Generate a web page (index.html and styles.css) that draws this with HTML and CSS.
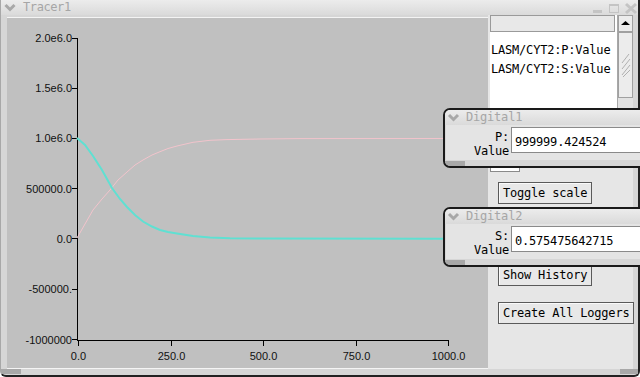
FILE: index.html
```html
<!DOCTYPE html>
<html>
<head>
<meta charset="utf-8">
<title>Tracer1</title>
<link rel="stylesheet" href="styles.css">
</head>
<body>
    <div class="tracer">
        <div class="titlebar">
            <svg class="chevron" width="14" height="15" viewBox="0 0 14 15"><polyline points="3.5,5 8,9.5 12.5,5" fill="none" stroke="#a8a8a8" stroke-width="3"/></svg>
            <span class="title">Tracer1</span>
            <div class="title-buttons">
                <svg width="48" height="15" viewBox="590 0 48 15">
                    <rect x="593" y="10" width="9" height="3" fill="#c4c4c4"/>
                    <rect x="609.5" y="4.5" width="9" height="8" fill="none" stroke="#c4c4c4" stroke-width="1"/>
                    <rect x="609" y="4" width="10" height="2" fill="#c4c4c4"/>
                    <path d="M626,4 L636,13 M636,4 L626,13" stroke="#c4c4c4" stroke-width="3"/>
                </svg>
            </div>
        </div>
        <div class="client">
            <div class="plot">
                <svg width="481" height="350" viewBox="7 18 481 350">
                    <g class="axis" stroke="#000" stroke-width="1">
                        <line x1="77.5" y1="38" x2="77.5" y2="341"/>
                        <line x1="77" y1="340.5" x2="449" y2="340.5"/>
                        <line x1="72" y1="38.5" x2="77.5" y2="38.5"/>
                        <line x1="72" y1="88.5" x2="77.5" y2="88.5"/>
                        <line x1="72" y1="138.5" x2="77.5" y2="138.5"/>
                        <line x1="72" y1="188.5" x2="77.5" y2="188.5"/>
                        <line x1="72" y1="238.5" x2="77.5" y2="238.5"/>
                        <line x1="72" y1="289.5" x2="77.5" y2="289.5"/>
                        <line x1="72" y1="339.5" x2="77.5" y2="339.5"/>
                        <line x1="78.5" y1="340.5" x2="78.5" y2="346"/>
                        <line x1="171.5" y1="340.5" x2="171.5" y2="346"/>
                        <line x1="263.5" y1="340.5" x2="263.5" y2="346"/>
                        <line x1="356.5" y1="340.5" x2="356.5" y2="346"/>
                        <line x1="448.5" y1="340.5" x2="448.5" y2="346"/>
                    </g>
                    <g class="ylabels" text-anchor="end">
                        <text x="72" y="42">2.0e6.0</text>
                        <text x="72" y="92">1.5e6.0</text>
                        <text x="72" y="142">1.0e6.0</text>
                        <text x="72" y="192.5">500000.0</text>
                        <text x="72" y="242.5">0.0</text>
                        <text x="72" y="293">-500000.</text>
                        <text x="72" y="343.5">-1000000</text>
                    </g>
                    <g class="xlabels" text-anchor="middle">
                        <text x="78.5" y="360">0.0</text>
                        <text x="171.5" y="360">250.0</text>
                        <text x="263.5" y="360">500.0</text>
                        <text x="356.5" y="360">750.0</text>
                        <text x="448.5" y="360">1000.0</text>
                    </g>
                    <polyline class="curve-p" points="77,238 85,224 93,210 102,199 110,190 118,180 127,172 135,165 143,160 152,155 160,151.7 168,148.5 177,146 193,142.3 210,140.3 227,139.6 260,139 300,138.6 448,138.5"/>
                    <polyline class="curve-s" points="77,138 85,145 93,156 102,170 112,188 120,199 127,207 135,215 143,221.5 152,226.5 160,230 168,232 177,233.5 193,236 210,237.5 230,238.3 260,238.6 448,238.7"/>
                </svg>
            </div>
            <div class="panel">
                <div class="list">
                    <div class="list-body">
                        <div class="list-header"></div>
                        <div class="list-row">LASM/CYT2:P:Value</div>
                        <div class="list-row">LASM/CYT2:S:Value</div>
                    </div>
                    <div class="scrollbar">
                        <div class="scroll-up">
                            <svg width="9" height="5" viewBox="0 0 9 5"><polygon points="4.5,0 9,4 0,4" fill="#000"/></svg>
                        </div>
                        <div class="scroll-thumb">
                            <svg width="10" height="24" viewBox="0 0 10 24"><path d="M1,10 L8,1 M1,16 L9,6 M1,22 L9,12 M2,24 L9,17" stroke="#b0b0b0" stroke-width="1" fill="none"/></svg>
                        </div>
                    </div>
                </div>
                <div class="small-field"></div>
                <button type="button" class="btn btn-toggle">Toggle scale</button>
                <button type="button" class="btn btn-history">Show History</button>
                <button type="button" class="btn btn-loggers">Create All Loggers</button>
            </div>
        </div>
    </div>

    <div class="digital digital-1">
        <div class="titlebar">
            <svg class="chevron" width="14" height="15" viewBox="0 0 14 15"><polyline points="3,5 7.5,9.5 12,5" fill="none" stroke="#a8a8a8" stroke-width="3"/></svg>
            <span class="title">Digital1</span>
        </div>
        <div class="digital-body">
            <div class="digital-label">P:<br>Value</div>
            <div class="digital-field">999999.424524</div>
        </div>
    </div>

    <div class="digital digital-2">
        <div class="titlebar">
            <svg class="chevron" width="14" height="15" viewBox="0 0 14 15"><polyline points="3,5 7.5,9.5 12,5" fill="none" stroke="#a8a8a8" stroke-width="3"/></svg>
            <span class="title">Digital2</span>
        </div>
        <div class="digital-body">
            <div class="digital-label">S:<br>Value</div>
            <div class="digital-field">0.575475642715</div>
        </div>
    </div>
</body>
</html>
```

FILE: styles.css
```css
body {
    margin: 0;
    width: 640px;
    height: 377px;
    overflow: hidden;
    position: relative;
    background-color: #fff;
    font-family: "DejaVu Sans Mono", "Liberation Mono", monospace;
    font-size: 12px;
}
.tracer {
    box-sizing: border-box;
    width: 640px;
    height: 377px;
    display: flex;
    flex-direction: column;
    background-color: #d6d6d6;
    border-left: 1px solid #a8a8a8;
    border-right: 2px solid #222;
    border-bottom: 2px solid #222;
    border-radius: 0 0 6px 6px;
    position: relative;
}
.tracer::before {
    content: "";
    position: absolute;
    left: 0;
    bottom: 1px;
    width: 20px;
    height: 5px;
    background-color: #a8a8a8;
}
.tracer::after {
    content: "";
    position: absolute;
    right: 0;
    bottom: 1px;
    width: 18px;
    height: 5px;
    background-color: #a8a8a8;
}
.titlebar {
    height: 15px;
    flex-shrink: 0;
    display: flex;
    align-items: center;
    background: linear-gradient(#ececec, #dadada);
}
.chevron {
    flex-shrink: 0;
    margin-left: 1px;
}
.title {
    margin-left: 7px;
    color: #a6a6a6;
    letter-spacing: -0.4px;
    line-height: 15px;
}
.title-buttons {
    margin-left: auto;
    display: flex;
}
.title-buttons svg {
    display: block;
}
.client {
    flex: 1;
    display: flex;
    padding: 0 5px 6px 6px;
}
.plot {
    flex: 1;
    margin-top: 2px;
    background-color: #c0c0c0;
    border-top: 1px solid #f4f4f4;
    border-bottom: 1px solid #f4f4f4;
}
.plot svg {
    display: block;
}
.ylabels text, .xlabels text {
    font-family: "Liberation Sans", Arial, sans-serif;
    font-size: 11px;
    fill: #111;
}
.curve-p {
    fill: none;
    stroke: #f2c4cc;
    stroke-width: 1;
}
.curve-s {
    fill: none;
    stroke: #5fe0d2;
    stroke-width: 2;
}
.panel {
    width: 145px;
    flex-shrink: 0;
    background-color: #e6e6e6;
    display: flex;
    flex-direction: column;
    align-items: flex-start;
}
.list {
    align-self: stretch;
    height: 137px;
    display: flex;
    margin-left: 2px;
    background-color: #fff;
}
.list-body {
    flex: 1;
}
.list-header {
    box-sizing: border-box;
    height: 17px;
    margin-right: 2px;
    background-color: #e8e8e8;
    border: 1px solid #9a9a9a;
    margin-bottom: 9px;
}
.list-row {
    height: 19px;
    line-height: 19px;
    padding-left: 1px;
    letter-spacing: -0.2px;
    white-space: nowrap;
}
.scrollbar {
    box-sizing: border-box;
    width: 16px;
    background-color: #e2e2e2;
    border-left: 1px solid #a8a8a8;
}
.scroll-up {
    box-sizing: border-box;
    height: 17px;
    border: 1px solid #a0a0a0;
    background-color: #ececec;
    display: flex;
    align-items: center;
    justify-content: center;
}
.scroll-thumb {
    box-sizing: border-box;
    height: 66px;
    border: 1px solid #a0a0a0;
    background-color: #ececec;
    display: flex;
    align-items: center;
    justify-content: center;
}
.small-field {
    box-sizing: border-box;
    width: 30px;
    height: 20px;
    margin-left: 2px;
    background-color: #fff;
    border: 1px solid #8a8a8a;
}
.btn {
    box-sizing: border-box;
    height: 22px;
    margin-left: 10px;
    padding: 0 4px;
    flex-shrink: 0;
    white-space: nowrap;
    font-family: "DejaVu Sans Mono", "Liberation Mono", monospace;
    font-size: 12px;
    letter-spacing: -0.2px;
    color: #000;
    background-color: #e8e8e8;
    border: 1px solid #5a5a5a;
    box-shadow: inset 1px 1px #fafafa;
    text-align: left;
}
.btn-toggle {
    margin-top: 10px;
}
.btn-history {
    margin-top: 60px;
}
.btn-loggers {
    margin-top: 16px;
}
.digital {
    position: absolute;
    left: 443px;
    width: 210px;
    height: 60px;
    box-sizing: border-box;
    border: 2px solid #1a1a1a;
    border-radius: 7px 0 0 7px;
    background-color: #d6d6d6;
    display: flex;
    flex-direction: column;
    overflow: hidden;
}
.digital::after {
    content: "";
    position: absolute;
    left: 0;
    bottom: 0;
    width: 20px;
    height: 5px;
    background-color: #a8a8a8;
}
.digital-1 {
    top: 108px;
}
.digital-2 {
    top: 207px;
}
.digital .title {
    margin-left: 6px;
    letter-spacing: -0.2px;
}
.digital-body {
    height: 35px;
    display: flex;
    background-color: #e4e4e4;
    margin-left: 1px;
}
.digital-label {
    width: 63px;
    flex-shrink: 0;
    text-align: right;
    line-height: 14px;
    padding-top: 5px;
    letter-spacing: -0.2px;
}
.digital-field {
    box-sizing: border-box;
    flex: 1;
    height: 26px;
    margin: 2px 0 0 2px;
    padding: 7px 0 0 3px;
    line-height: 14px;
    background-color: #fff;
    border: 1px solid #8a8a8a;
    letter-spacing: -0.2px;
    white-space: nowrap;
}
```
